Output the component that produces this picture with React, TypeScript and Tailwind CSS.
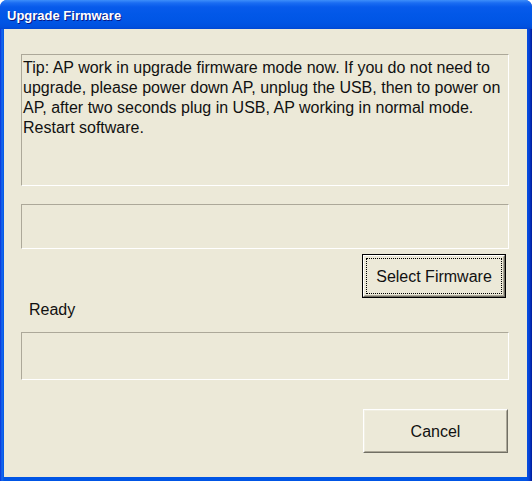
import React from "react";

export default function App() {
  const font = { fontFamily: '"Liberation Sans", Arial, sans-serif' };
  return (
    <div className="w-[532px] h-[481px] bg-white" style={font}>
      <div className="w-[532px] h-[481px] rounded-t-[7px] flex flex-col bg-[linear-gradient(to_right,#0831D9_0px,#166AEE_2px,#0055E5_4px,#0055E5_526px,#0843D8_529px,#001C9A_532px)] overflow-hidden">
        <div className="h-[29px] shrink-0 flex items-center pl-[7px] bg-[linear-gradient(to_bottom,#3D8EFA_0px,#1A6CF2_3px,#075AEB_7px,#0258E8_14px,#0055E5_22px,#0050DE_27px,#0146D3_29px)]">
          <span className="text-white font-bold text-[13px] leading-none mt-[1px] [text-shadow:1px_1px_0_#0A1883]">
            Upgrade Firmware
          </span>
        </div>
        <div className="flex-1 ml-[4px] mr-[5px] mb-[4px] bg-[#ECE9D8] flex flex-col pl-[17px] pr-[18px] text-[16px] text-[#111]">
          <div className="mt-[25px] h-[132px] border border-t-[#ACA899] border-l-[#ACA899] border-r-white border-b-white pl-[1px] pt-[3px] leading-[20px]">
            Tip: AP work in upgrade firmware mode now. If you do not need to upgrade, please power down AP, unplug the USB, then to power on AP, after two seconds plug in USB, AP working in normal mode. Restart software.
          </div>
          <div className="mt-[18px] h-[45px] border border-t-[#ACA899] border-l-[#ACA899] border-r-white border-b-white" />
          <div className="mt-[5px] self-end mr-[3px] w-[144px] h-[44px] border border-black">
            <div className="w-full h-full border border-t-white border-l-white border-r-[#716F64] border-b-[#716F64]">
              <div className="w-full h-full border border-r-[#ACA899] border-b-[#ACA899] border-t-[#ECE9D8] border-l-[#ECE9D8] p-[1px]">
                <div className="w-full h-full border border-dotted border-black flex items-center justify-center leading-none pt-[2px]">
                  Select Firmware
                </div>
              </div>
            </div>
          </div>
          <div className="mt-[2px] h-[20px] leading-[20px] pl-[8px]">Ready</div>
          <div className="mt-[12px] h-[48px] border border-t-[#ACA899] border-l-[#ACA899] border-r-white border-b-white" />
          <div className="mt-[29px] self-end mr-[1px] w-[145px] h-[44px] border border-t-white border-l-white border-r-[#716F64] border-b-[#716F64]">
            <div className="w-full h-full border border-r-[#ACA899] border-b-[#ACA899] border-t-[#F1EFE2] border-l-[#F1EFE2] flex items-center justify-center leading-none pt-[2px]">
              Cancel
            </div>
          </div>
        </div>
      </div>
    </div>
  );
}
